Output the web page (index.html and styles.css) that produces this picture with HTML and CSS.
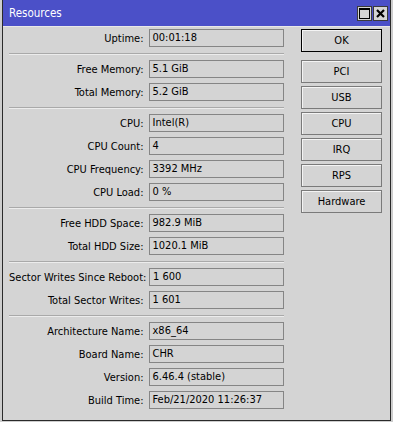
FILE: index.html
```html
<!DOCTYPE html>
<html>
<head>
	<meta charset="utf-8" />
	<link rel="stylesheet" href="styles.css">
</head>
<body>
<div id="resources_window" class="window">

<div class="titlebar">
	<span class="title">Resources</span>
	<div class="title_btns">
		<div class="tbtn"><svg width="11" height="11" viewBox="0 0 11 11"><rect x="0.5" y="0.5" width="10" height="10" fill="none" stroke="#000"/><rect x="0" y="0" width="11" height="2" fill="#000"/></svg></div>
		<div class="tbtn"><svg width="11" height="11" viewBox="0 0 11 11"><path d="M2 2 L9 9 M9 2 L2 9" stroke="#000" stroke-width="2.2"/></svg></div>
	</div>
</div>

<div class="body">
<div class="fields">
	<div class="row"><span class="lbl">Uptime:</span><div class="field">00:01:18</div></div>
	<div class="sep"></div>
	<div class="row"><span class="lbl">Free Memory:</span><div class="field">5.1 GiB</div></div>
	<div class="row"><span class="lbl">Total Memory:</span><div class="field">5.2 GiB</div></div>
	<div class="sep"></div>
	<div class="row"><span class="lbl">CPU:</span><div class="field">Intel(R)</div></div>
	<div class="row"><span class="lbl">CPU Count:</span><div class="field">4</div></div>
	<div class="row"><span class="lbl">CPU Frequency:</span><div class="field">3392 MHz</div></div>
	<div class="row"><span class="lbl">CPU Load:</span><div class="field">0 %</div></div>
	<div class="sep"></div>
	<div class="row"><span class="lbl">Free HDD Space:</span><div class="field">982.9 MiB</div></div>
	<div class="row"><span class="lbl">Total HDD Size:</span><div class="field">1020.1 MiB</div></div>
	<div class="sep"></div>
	<div class="row"><span class="lbl">Sector Writes Since Reboot:</span><div class="field">1 600</div></div>
	<div class="row"><span class="lbl">Total Sector Writes:</span><div class="field">1 601</div></div>
	<div class="sep"></div>
	<div class="row"><span class="lbl">Architecture Name:</span><div class="field">x86_64</div></div>
	<div class="row"><span class="lbl">Board Name:</span><div class="field">CHR</div></div>
	<div class="row"><span class="lbl">Version:</span><div class="field">6.46.4 (stable)</div></div>
	<div class="row"><span class="lbl">Build Time:</span><div class="field">Feb/21/2020 11:26:37</div></div>
</div>

<div class="buttons">
	<button type="button" class="wbtn default_btn">OK</button>
	<button type="button" class="wbtn">PCI</button>
	<button type="button" class="wbtn">USB</button>
	<button type="button" class="wbtn">CPU</button>
	<button type="button" class="wbtn">IRQ</button>
	<button type="button" class="wbtn">RPS</button>
	<button type="button" class="wbtn">Hardware</button>
</div>
</div>

</div>
</body>
</html>
```

FILE: styles.css
```css
body {
	margin: 0;
	background-color: #cdcdcd;
	font-family: "DejaVu Sans Condensed", "DejaVu Sans", sans-serif;
	font-stretch: condensed;
	font-size: 11px;
	color: #000;
}

.window {
	margin-left: 2px;
	width: 387px;
	height: 420px;
	background-color: #d4d4d4;
	border-left: 1px solid #2a2a2a;
	border-right: 1px solid #2a2a2a;
	border-bottom: 1px solid #2a2a2a;
	display: flex;
	flex-direction: column;
}

.titlebar {
	height: 26px;
	background-color: #4b50c8;
	border-bottom: 1px solid #e8e8e8;
	display: flex;
	align-items: center;
	padding-left: 6px;
	padding-right: 2px;
}

.title {
	color: #fff;
	font-size: 11.5px;
	flex: 1;
}

.title_btns {
	display: flex;
	gap: 1px;
}

.tbtn {
	width: 13px;
	height: 13px;
	background-color: #d4d4d4;
	border: 1px solid #3a3a3a;
	display: flex;
	align-items: center;
	justify-content: center;
}

.body {
	display: flex;
	padding: 2px 0 0 6px;
}

.fields {
	width: 275px;
	display: flex;
	flex-direction: column;
	gap: 5px;
}

.row {
	display: flex;
	height: 18px;
	align-items: center;
	gap: 5px;
}

.lbl {
	width: 135px;
	text-align: right;
	white-space: nowrap;
}

.field {
	width: 131px;
	height: 16px;
	line-height: 16px;
	padding-left: 3px;
	border: 1px solid #858585;
	white-space: nowrap;
}

.sep {
	height: 1px;
	background-color: #a9a9a9;
	border-bottom: 1px solid #ececec;
	margin-top: 1px;
}

.buttons {
	margin-left: 17px;
	display: flex;
	flex-direction: column;
	gap: 3px;
}

.wbtn {
	width: 81px;
	height: 23px;
	padding: 0;
	font-family: inherit;
	font-stretch: condensed;
	font-size: 11px;
	background-color: #d4d4d4;
	border: 1px solid #7a7a7a;
	box-shadow: inset 1px 1px 0 #f4f4f4;
}

.default_btn {
	border-color: #000;
	margin-bottom: 5px;
}
```
